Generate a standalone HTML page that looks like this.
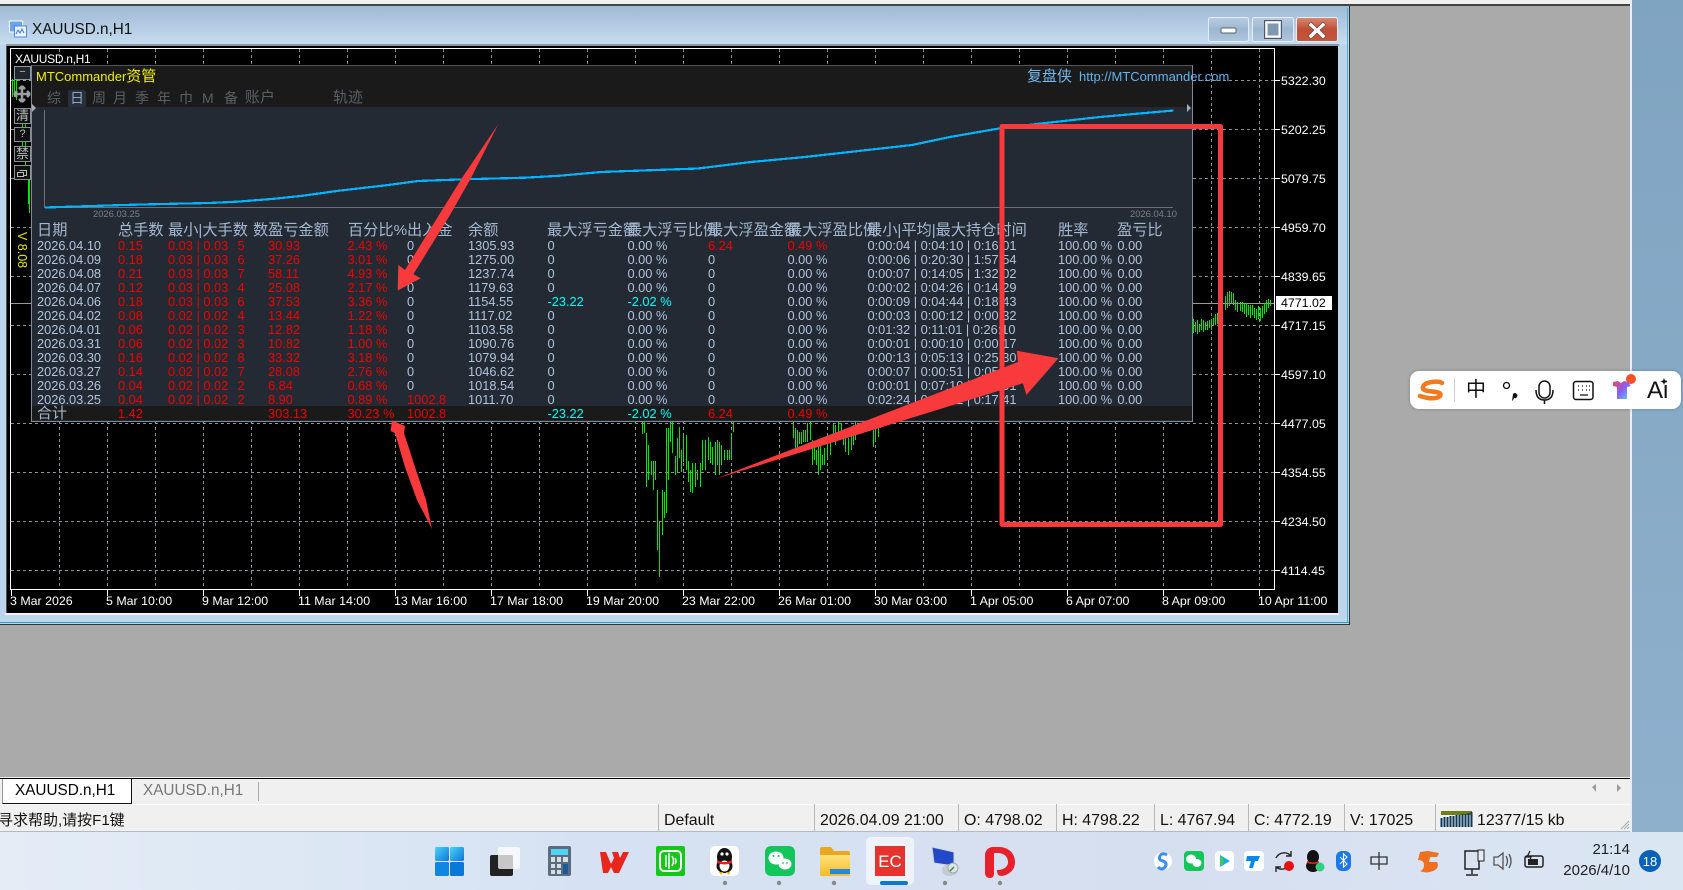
<!DOCTYPE html>
<html><head><meta charset="utf-8"><style>
html,body{margin:0;padding:0;width:1683px;height:890px;overflow:hidden;background:#aaa}
body{position:relative;font-family:"Liberation Sans","Noto Sans CJK SC",sans-serif}
.a{position:absolute;white-space:nowrap}
svg{position:absolute;left:0;top:0;overflow:visible}
.p{color:#fff;font-size:12.4px;left:1281px;line-height:14px}
.d{color:#fff;font-size:12.4px;top:594px;line-height:14px}
.h{top:223px;line-height:16px;font-size:15.2px;color:#a4b8d2}
.t{top:90px;line-height:16px;font-size:14px;color:#5b5f64}
.s{top:812px;line-height:18px;font-size:15.9px;color:#111}
.sep{position:absolute;top:804px;height:27px;width:1px;background:#b8b8b8}
table{position:absolute;left:37px;top:239px;border-collapse:collapse;table-layout:fixed;width:1120.4px;font-size:12.8px;color:#b0c4de}
td{padding:0;height:14px;line-height:14px;white-space:nowrap;overflow:visible}
.r{color:#f00000}.c{color:#0ff}
</style></head><body>

<!-- top strip -->
<div class="a" style="left:0;top:0;width:1630px;height:4px;background:#f0f0f0"></div>
<div class="a" style="left:0;top:4px;width:1630px;height:2px;background:#444"></div>
<!-- wallpaper right -->
<div class="a" style="left:1632px;top:0;width:51px;height:832px;background:linear-gradient(180deg,#7fa4c1,#8fb0cd)"></div>
<div class="a" style="left:1630px;top:0;width:2px;height:832px;background:#e8eef4"></div>

<!-- window -->
<div class="a" style="left:0;top:6px;width:1349px;height:618px;background:linear-gradient(180deg,#9fb9d4 0,#c6dcf0 38px,#bdd5ea 39px);border-right:1px solid #333;border-bottom:1px solid #333;box-sizing:content-box"></div>
<div class="a" style="left:0;top:622px;width:1349px;height:1px;background:#18a6c4"></div>
<div class="a" style="left:1347px;top:8px;width:1px;height:614px;background:#4fb2d8"></div>
<div class="a" style="left:6px;top:44px;width:1333px;height:2px;background:#8d98a4"></div>
<div class="a" style="left:6px;top:46px;width:1px;height:567px;background:#555"></div>
<div class="a" style="left:7px;top:46px;width:1331px;height:567px;background:#000"></div>
<div class="a" style="left:5px;top:613px;width:1334px;height:2px;background:#eef4fa"></div>
<div class="a" style="left:32px;top:21px;font-size:15.3px;line-height:18px;color:#111">XAUUSD.n,H1</div>

<!-- window buttons / chart -->
<svg width="1683" height="890">
<defs>
<linearGradient id="b1" x1="0" y1="0" x2="0" y2="1"><stop offset="0" stop-color="#b9cde2"/><stop offset=".5" stop-color="#9db6d1"/><stop offset="1" stop-color="#aec6de"/></linearGradient>
<linearGradient id="b2" x1="0" y1="0" x2="0" y2="1"><stop offset="0" stop-color="#d98a74"/><stop offset=".5" stop-color="#bf4e36"/><stop offset="1" stop-color="#c7553a"/></linearGradient>
<linearGradient id="w1" x1="0" y1="0" x2="1" y2="1"><stop offset="0" stop-color="#4fd0fb"/><stop offset="1" stop-color="#0a78d8"/></linearGradient>
<linearGradient id="sh" x1="0" y1="0" x2="1" y2="1"><stop offset="0" stop-color="#f04a5a"/><stop offset=".5" stop-color="#8a5cf0"/><stop offset="1" stop-color="#4fe0f0"/></linearGradient>
<linearGradient id="fo" x1="0" y1="0" x2="0" y2="1"><stop offset="0" stop-color="#ffe27a"/><stop offset="1" stop-color="#f6b928"/></linearGradient>
</defs>
<!-- title icon -->
<rect x="9.5" y="21" width="13" height="11" fill="#6aa4e8" stroke="#fff"/><rect x="14.5" y="26" width="12" height="11" fill="#eaf3ff" stroke="#4a8ae0"/><path d="M16 34l2-4 2 3 2-4 2 4" fill="none" stroke="#3a78d0"/>
<rect x="1208.5" y="17.5" width="40" height="24" rx="2" fill="url(#b1)" stroke="#e4eef8"/>
<rect x="1221" y="28" width="15" height="5" rx="1" fill="#fff" stroke="#566"/>
<rect x="1252.5" y="17.5" width="41" height="24" rx="2" fill="url(#b1)" stroke="#e4eef8"/>
<rect x="1266.5" y="22.5" width="13" height="14" fill="#7f97b2" stroke="#fff" stroke-width="2"/><rect x="1264.5" y="20.5" width="17" height="18" fill="none" stroke="#556"/>
<rect x="1296.5" y="17.5" width="41" height="24" rx="2" fill="url(#b2)" stroke="#e4eef8"/>
<path d="M1311 22l6 6 6-6 3 3-6 5 6 6-3 3-6-6-6 6-3-3 6-6-6-5z" fill="#fff" stroke="#633" stroke-width=".6"/>
<!-- grid -->
<g stroke="#8a929a" stroke-width="1" stroke-dasharray="3 3" fill="none">
<path d="M11 80.5H1274M11 129.5H1274M11 178.5H1274M11 227.5H1274M11 276.5H1274M11 325.5H1274M11 374.5H1274M11 423.5H1274M11 472.5H1274M11 521.5H1274M11 570.5H1274"/>
<path d="M59.5 49V589M107.5 49V589M155.5 49V589M203.5 49V589M251.5 49V589M299.5 49V589M347.5 49V589M395.5 49V589M443.5 49V589M491.5 49V589M539.5 49V589M587.5 49V589M635.5 49V589M683.5 49V589M731.5 49V589M779.5 49V589M827.5 49V589M875.5 49V589M923.5 49V589M971.5 49V589M1019.5 49V589M1067.5 49V589M1115.5 49V589M1163.5 49V589M1211.5 49V589M1259.5 49V589"/>
</g>
<path d="M11 303.5H1274" stroke="#9a9a9a"/>
<rect x="10.5" y="48.5" width="1264" height="541" fill="none" stroke="#fff"/>
<path d="M11.5 590V596M107.5 590V596M203.5 590V596M299.5 590V596M395.5 590V596M491.5 590V596M587.5 590V596M683.5 590V596M779.5 590V596M875.5 590V596M971.5 590V596M1067.5 590V596M1163.5 590V596M1259.5 590V596M1275 80.5H1280M1275 129.5H1280M1275 178.5H1280M1275 227.5H1280M1275 276.5H1280M1275 325.5H1280M1275 374.5H1280M1275 423.5H1280M1275 472.5H1280M1275 521.5H1280M1275 570.5H1280" stroke="#fff"/>
<!-- candles -->
<path fill="none" stroke="#00e800" stroke-width="1" d="M12.5 79V97M14.5 79V97M16.5 80V100M22.5 122V146M25.5 122V170M28.5 170V204M29.5 178V213
M635.5 420V424M642.5 420V434M644.5 420V433M646.5 433V487M648.5 445V480M651.5 461V475M653.5 461V490M655.5 461V480M657.5 490V550M659.5 522V577M662.5 490V535M664.5 492V518M666.5 428V513M668.5 428V480M670.5 420V442M672.5 420V453M675.5 456V475M677.5 438V473M679.5 427V458M681.5 450V472M683.5 435V462M686.5 435V470M688.5 461V482M690.5 470V492M692.5 463V493M695.5 463V487M697.5 470V480M700.5 463V487M702.5 440V470M705.5 440V470M708.5 437V460M710.5 442V463M712.5 447V465M715.5 442V475M717.5 440V465M719.5 442V475M721.5 445V465M724.5 450V460M727.5 450V460M729.5 450V460M731.5 433V458M733.5 420V432
M793.5 420V438M795.5 428V448M797.5 430V448M799.5 432V444M801.5 432V444M803.5 430V442M805.5 430V442M807.5 423V442M810.5 422V440M812.5 440V465M814.5 442V460M816.5 450V465M818.5 445V475M820.5 443V470M822.5 455V465M824.5 448V465M827.5 440V458M830.5 438V455M833.5 424V440M835.5 425V445M838.5 422V440M841.5 423V438M843.5 435V445M845.5 438V452M848.5 438V455M851.5 435V450M853.5 425V445M855.5 420V440M873.5 430V447M875.5 428V442M878.5 420V437M880.5 420V428
M1193.5 319V333M1195.5 322V332M1197.5 320V334M1199.5 324V332M1201.5 319V330M1203.5 320V332M1205.5 322V330M1207.5 321V330M1209.5 320V328M1211.5 319V330M1213.5 318V326M1215.5 314V325M1217.5 313V324M1219.5 303V318M1222.5 300V317M1225.5 296V310M1227.5 292V308M1229.5 291V306M1231.5 292V303M1233.5 293V305M1235.5 300V310M1237.5 302V312M1240.5 302V311M1242.5 302V312M1244.5 303V314M1246.5 303V317M1248.5 305V315M1250.5 305V318M1252.5 305V315M1254.5 308V318M1256.5 309V320M1258.5 306V319M1260.5 308V321M1262.5 306V318M1264.5 303V314M1266.5 300V312M1268.5 299V308M1270.5 300V306"/>
</svg>

<!-- chart labels -->
<div class="a" style="left:15px;top:52px;font-size:12px;letter-spacing:-.3px;line-height:14px;color:#fff">XAUUSD.n,H1</div>
<div class="a p" style="top:74px">5322.30</div><div class="a p" style="top:123px">5202.25</div><div class="a p" style="top:172px">5079.75</div><div class="a p" style="top:221px">4959.70</div><div class="a p" style="top:270px">4839.65</div><div class="a p" style="top:319px">4717.15</div><div class="a p" style="top:368px">4597.10</div><div class="a p" style="top:417px">4477.05</div><div class="a p" style="top:466px">4354.55</div><div class="a p" style="top:515px">4234.50</div><div class="a p" style="top:564px">4114.45</div>
<div class="a" style="left:1276px;top:296px;width:56px;height:14px;background:#fff"></div>
<div class="a p" style="top:296px;color:#000">4771.02</div>
<div class="a d" style="left:10px">3 Mar 2026</div><div class="a d" style="left:106px">5 Mar 10:00</div><div class="a d" style="left:202px">9 Mar 12:00</div><div class="a d" style="left:298px">11 Mar 14:00</div><div class="a d" style="left:394px">13 Mar 16:00</div><div class="a d" style="left:490px">17 Mar 18:00</div><div class="a d" style="left:586px">19 Mar 20:00</div><div class="a d" style="left:682px">23 Mar 22:00</div><div class="a d" style="left:778px">26 Mar 01:00</div><div class="a d" style="left:874px">30 Mar 03:00</div><div class="a d" style="left:970px">1 Apr 05:00</div><div class="a d" style="left:1066px">6 Apr 07:00</div><div class="a d" style="left:1162px">8 Apr 09:00</div><div class="a d" style="left:1258px">10 Apr 11:00</div>

<!-- side buttons -->
<div class="a" style="left:14px;top:66px;width:15px;height:12px;border:1px solid #8a98a6;background:#20262c;color:#bbb;font-size:11px;line-height:11px;text-align:center">−</div>
<svg width="1683" height="890"><path d="M22 86V102M14 94H30M22 86l-3 3M22 86l3 3M22 102l-3-3M22 102l3-3M14 94l3-3M14 94l3 3M30 94l-3-3M30 94l-3 3" stroke="#9a9ea2" stroke-width="2.500" fill="none"/></svg>
<div class="a" style="left:14px;top:108px;width:15px;height:14px;border:1px solid #8a9096;background:#111;color:#bbb;font-size:13px;line-height:14px;text-align:center">清</div>
<div class="a" style="left:14px;top:127px;width:15px;height:13px;border:1px solid #8a9096;background:#111;color:#bbb;font-size:11px;line-height:13px;text-align:center">?</div>
<div class="a" style="left:14px;top:146px;width:15px;height:14px;border:1px solid #8a9096;background:#111;color:#bbb;font-size:13px;line-height:14px;text-align:center">禁</div>
<div class="a" style="left:14px;top:165px;width:15px;height:13px;border:1px solid #8a9096;background:#111"></div>
<svg width="1683" height="890"><path d="M19.5 170.5h7v5h-3M17.5 172.5h6v4h-6z" fill="none" stroke="#bbb"/></svg>
<div class="a" style="left:14px;top:232px;width:16px;height:40px;writing-mode:vertical-rl;color:#e8e800;font-size:12.5px;line-height:16px">V 8.08</div>

<!-- panel -->
<div class="a" style="left:31px;top:65px;width:1160px;height:355px;background:#232a33;border:1px solid #7d8a9a;border-top-color:#555;box-sizing:content-box"></div>
<div class="a" style="left:32px;top:66px;width:1160px;height:41px;background:#1a1a1a"></div>
<div class="a" style="left:32px;top:406px;width:1160px;height:14px;background:#1a1a1a"></div>
<div class="a" style="left:36px;top:68px;font-size:13px;line-height:18px;color:#f0f000">MTCommander<span style="font-size:15px">资管</span></div>
<div class="a" style="left:68px;top:90px;width:18px;height:17px;background:#27303c;border-radius:2px"></div>
<div class="a t" style="left:47px">综</div><div class="a t" style="left:70px;color:#90a6c0">日</div><div class="a t" style="left:92px">周</div><div class="a t" style="left:113px">月</div><div class="a t" style="left:135px">季</div><div class="a t" style="left:157px">年</div><div class="a t" style="left:179px">巾</div><div class="a t" style="left:202px">M</div><div class="a t" style="left:224px">备</div><div class="a t" style="left:245px;font-size:15px">账户</div><div class="a t" style="left:333px;font-size:15px">轨迹</div>
<div class="a" style="left:1027px;top:68px;font-size:15px;line-height:18px;color:#74b8ee">复盘侠</div>
<div class="a" style="left:1079px;top:69px;font-size:13px;line-height:16px;color:#64b2ee">http://MTCommander.com</div>

<svg width="1683" height="890">
<path d="M32 104l4 4-4 4zM1191 108l-4-4v8z" fill="#aab"/>
<path d="M44.5 110V207.5H1173" fill="none" stroke="#6c7076"/>
<polyline shape-rendering="crispEdges" points="45,207.500 93,206 123,205 162,204 209,203 237,201.700 275,198.700 303,195.700 339,190.700 386,185.300 418,181 464,179.300 525,177.700 560,175.700 601,172 698,168.500 751,162 805,157 912,145 950,137 973,133 999,128.500 1041,123.500 1100,117 1173.500,110.500" fill="none" stroke="#00b4ff" stroke-width="2.200"/>
</svg>
<div class="a" style="left:93px;top:208px;font-size:9.4px;line-height:12px;color:#7c8087">2026.03.25</div>
<div class="a" style="left:1130px;top:208px;font-size:9.4px;line-height:12px;color:#7c8087">2026.04.10</div>

<div class="a h" style="left:37px">日期</div><div class="a h" style="left:118px">总手数</div><div class="a h" style="left:168px">最小|大手数</div><div class="a h" style="left:253px">数</div><div class="a h" style="left:268px">盈亏金额</div><div class="a h" style="left:348px">百分比%</div><div class="a h" style="left:407px">出入金</div><div class="a h" style="left:468px">余额</div><div class="a h" style="left:547px">最大浮亏金额</div><div class="a h" style="left:627px">最大浮亏比例</div><div class="a h" style="left:708px">最大浮盈金额</div><div class="a h" style="left:787px">最大浮盈比例</div><div class="a h" style="left:867px">最小|平均|最大持仓时间</div><div class="a h" style="left:1058px">胜率</div><div class="a h" style="left:1117px">盈亏比</div>

<table>
<colgroup><col style="width:81px"><col style="width:50px"><col style="width:69.5px"><col style="width:30.5px"><col style="width:79.5px"><col style="width:59.5px"><col style="width:61px"><col style="width:79.5px"><col style="width:80px"><col style="width:80.5px"><col style="width:79.5px"><col style="width:80px"><col style="width:190.5px"><col style="width:59.4px"><col style="width:40px"></colgroup>
<tr><td>2026.04.10<td class=r>0.15<td class=r>0.03 | 0.03<td class=r>5<td class=r>30.93<td class=r>2.43 %<td>0<td>1305.93<td>0<td>0.00 %<td class=r>6.24<td class=r>0.49 %<td>0:00:04 | 0:04:10 | 0:16:01<td>100.00 %<td>0.00
<tr><td>2026.04.09<td class=r>0.18<td class=r>0.03 | 0.03<td class=r>6<td class=r>37.26<td class=r>3.01 %<td>0<td>1275.00<td>0<td>0.00 %<td>0<td>0.00 %<td>0:00:06 | 0:20:30 | 1:57:54<td>100.00 %<td>0.00
<tr><td>2026.04.08<td class=r>0.21<td class=r>0.03 | 0.03<td class=r>7<td class=r>58.11<td class=r>4.93 %<td>0<td>1237.74<td>0<td>0.00 %<td>0<td>0.00 %<td>0:00:07 | 0:14:05 | 1:32:02<td>100.00 %<td>0.00
<tr><td>2026.04.07<td class=r>0.12<td class=r>0.03 | 0.03<td class=r>4<td class=r>25.08<td class=r>2.17 %<td>0<td>1179.63<td>0<td>0.00 %<td>0<td>0.00 %<td>0:00:02 | 0:04:26 | 0:14:29<td>100.00 %<td>0.00
<tr><td>2026.04.06<td class=r>0.18<td class=r>0.03 | 0.03<td class=r>6<td class=r>37.53<td class=r>3.36 %<td>0<td>1154.55<td class=c>-23.22<td class=c>-2.02 %<td>0<td>0.00 %<td>0:00:09 | 0:04:44 | 0:18:43<td>100.00 %<td>0.00
<tr><td>2026.04.02<td class=r>0.08<td class=r>0.02 | 0.02<td class=r>4<td class=r>13.44<td class=r>1.22 %<td>0<td>1117.02<td>0<td>0.00 %<td>0<td>0.00 %<td>0:00:03 | 0:00:12 | 0:00:32<td>100.00 %<td>0.00
<tr><td>2026.04.01<td class=r>0.06<td class=r>0.02 | 0.02<td class=r>3<td class=r>12.82<td class=r>1.18 %<td>0<td>1103.58<td>0<td>0.00 %<td>0<td>0.00 %<td>0:01:32 | 0:11:01 | 0:26:10<td>100.00 %<td>0.00
<tr><td>2026.03.31<td class=r>0.06<td class=r>0.02 | 0.02<td class=r>3<td class=r>10.82<td class=r>1.00 %<td>0<td>1090.76<td>0<td>0.00 %<td>0<td>0.00 %<td>0:00:01 | 0:00:10 | 0:00:17<td>100.00 %<td>0.00
<tr><td>2026.03.30<td class=r>0.16<td class=r>0.02 | 0.02<td class=r>8<td class=r>33.32<td class=r>3.18 %<td>0<td>1079.94<td>0<td>0.00 %<td>0<td>0.00 %<td>0:00:13 | 0:05:13 | 0:25:30<td>100.00 %<td>0.00
<tr><td>2026.03.27<td class=r>0.14<td class=r>0.02 | 0.02<td class=r>7<td class=r>28.08<td class=r>2.76 %<td>0<td>1046.62<td>0<td>0.00 %<td>0<td>0.00 %<td>0:00:07 | 0:00:51 | 0:05:40<td>100.00 %<td>0.00
<tr><td>2026.03.26<td class=r>0.04<td class=r>0.02 | 0.02<td class=r>2<td class=r>6.84<td class=r>0.68 %<td>0<td>1018.54<td>0<td>0.00 %<td>0<td>0.00 %<td>0:00:01 | 0:07:10 | 0:14:01<td>100.00 %<td>0.00
<tr><td>2026.03.25<td class=r>0.04<td class=r>0.02 | 0.02<td class=r>2<td class=r>8.90<td class=r>0.89 %<td class=r>1002.8<td>1011.70<td>0<td>0.00 %<td>0<td>0.00 %<td>0:02:24 | 0:08:12 | 0:17:41<td>100.00 %<td>0.00
<tr><td style="font-size:15px;color:#a4b8d2">合计<td class=r>1.42<td><td><td class=r>303.13<td class=r>30.23 %<td class=r>1002.8<td><td class=c>-23.22<td class=c>-2.02 %<td class=r>6.24<td class=r>0.49 %<td><td><td>
</table>

<!-- red annotations -->
<svg width="1683" height="890">
<path d="M498.300 124L471 178L450 215L413.300 274.300L420.700 278.300L397.700 290.500L398.300 265L405 270L439 215L462 178Z" fill="#f93a3c"/>
<path d="M392 420.500L405 426L404 433L415 467L426 500L432 529L417 500L405 467L395 433L390.600 431Z" fill="#f93a3c"/>
<path d="M716 478.700L1018 362L1016.800 350.700L1058.500 358.300L1026.400 395L1022.900 383.300Z" fill="#f93a3c"/>
<path d="M1002 126.500H1220.500V524.500H1002Z" fill="none" stroke="#f93a3c" stroke-width="5" stroke-linejoin="round"/>
</svg>

<!-- tab bar / status -->
<div class="a" style="left:0;top:777px;width:1630px;height:55px;background:#f0f0f0"></div>
<div class="a" style="left:0;top:778px;width:1630px;height:1px;background:#000"></div>
<div class="a" style="left:2px;top:779px;width:128px;height:24px;background:#fff;border-right:1px solid #111;border-bottom:1px solid #111;border-left:1px solid #999"></div>
<div class="a" style="left:15px;top:782px;font-size:15.3px;line-height:18px;color:#000">XAUUSD.n,H1</div>
<div class="a" style="left:143px;top:782px;font-size:15.3px;line-height:18px;color:#777">XAUUSD.n,H1</div>
<div class="a" style="left:258px;top:782px;width:1px;height:19px;background:#aaa"></div>
<div class="a" style="left:0;top:804px;width:1630px;height:1px;background:#fafafa"></div>
<div class="a" style="left:0;top:831px;width:1630px;height:1px;background:#b4bac4"></div>
<div class="a s" style="left:-2px;font-size:15px">寻求帮助,请按F1键</div>
<div class="sep" style="left:658px"></div><div class="sep" style="left:814px"></div><div class="sep" style="left:958px"></div><div class="sep" style="left:1056px"></div><div class="sep" style="left:1154px"></div><div class="sep" style="left:1248px"></div><div class="sep" style="left:1344px"></div><div class="sep" style="left:1435px"></div>
<div class="a s" style="left:664px">Default</div><div class="a s" style="left:820px">2026.04.09 21:00</div><div class="a s" style="left:964px">O: 4798.02</div><div class="a s" style="left:1062px">H: 4798.22</div><div class="a s" style="left:1160px">L: 4767.94</div><div class="a s" style="left:1254px">C: 4772.19</div><div class="a s" style="left:1350px">V: 17025</div><div class="a s" style="left:1477px">12377/15 kb</div>

<!-- taskbar -->
<div class="a" style="left:0;top:832px;width:1683px;height:58px;background:linear-gradient(90deg,#e4edf6,#d6e2f3 35%,#d6dff0 70%,#dbe6f3)"></div>
<div class="a" style="left:866px;top:837px;width:48px;height:48px;background:#eef2f9;border-radius:5px"></div>

<svg width="1683" height="890">
<path d="M1592 787l4-3v8zM1617 784l4 4-4 4z" fill="#9a9a9a"/>
<!-- net bars -->
<path d="M1441 815h31v-4h-31z" fill="#6f7f14"/><path d="M1441.500 827V818M1444.500 827V817M1447.500 827V817M1450.500 827V816M1453.500 827V816M1456.500 827V815M1459.500 827V815M1462.500 827V814M1465.500 827V814M1468.500 827V813M1471.500 827V812" stroke="#0e3a5a" stroke-width="2"/>
<path d="M1621 829l8-8M1624 829l5-5M1627 829l2-2" stroke="#aaa"/>
<!-- start -->
<g><rect x="435" y="847" width="14" height="14" rx="1.500" fill="url(#w1)"/><rect x="450" y="847" width="14" height="14" rx="1.500" fill="url(#w1)"/><rect x="435" y="862" width="14" height="14" rx="1.500" fill="#0f86e0"/><rect x="450" y="862" width="14" height="14" rx="1.500" fill="#0a78d8"/></g>
<!-- task view -->
<rect x="490" y="855" width="23" height="21" rx="2" fill="#222"/><rect x="498" y="847" width="22" height="22" rx="2" fill="#fff" fill-opacity=".75"/>
<!-- calc -->
<rect x="548" y="846" width="23" height="30" rx="2" fill="#5a6c7e"/><rect x="551" y="849" width="17" height="6" fill="#4fd4f4"/><path d="M551 857h4v5h-4zM557 857h4v5h-4zM563 857h5v5h-5zM551 864h4v4h-4zM557 864h4v4h-4zM551 870h4v4h-4zM557 870h4v4h-4z" fill="#d8dde2"/><rect x="563" y="864" width="5" height="10" fill="#1a5a9a"/>
<!-- WPS -->
<path d="M600 852h6l5 12 3-6-2-6h6l2 6 3-6h6l-10 21h-5l-3-6-3 6h-5z" fill="#e8261c"/>
<!-- green app -->
<rect x="656" y="846" width="29" height="30" rx="2" fill="#14c81a"/><rect x="660" y="851" width="21" height="20" rx="4" fill="none" stroke="#fff" stroke-width="2"/><path d="M666 855v12M669 853v16M672 856q3 5 0 10M675 858q2 3 0 6" stroke="#fff" stroke-width="1.500" fill="none"/>
<!-- QQ -->
<rect x="710" y="846" width="29" height="30" rx="5" fill="#fff"/><ellipse cx="724.500" cy="857" rx="7.500" ry="9" fill="#111"/><ellipse cx="724.500" cy="866" rx="8" ry="7" fill="#111"/><ellipse cx="724.500" cy="866" rx="5" ry="5.500" fill="#fff"/><circle cx="722" cy="854" r="1.600" fill="#fff"/><circle cx="727" cy="854" r="1.600" fill="#fff"/><path d="M717 860q7.500 4 15 0v3q-7 3-15 0z" fill="#e8201c"/><path d="M719 872h4l-2 3zM726 872h4l-1 3z" fill="#f4a818"/>
<!-- wechat -->
<rect x="765" y="846" width="30" height="30" rx="6" fill="#12c65c"/><ellipse cx="776" cy="858" rx="7.500" ry="6.500" fill="#fff"/><ellipse cx="785" cy="864" rx="6.500" ry="5.500" fill="#fff"/><circle cx="773.500" cy="856" r="1" fill="#12c65c"/><circle cx="778.500" cy="856" r="1" fill="#12c65c"/><circle cx="783" cy="863" r=".9" fill="#12c65c"/><circle cx="787" cy="863" r=".9" fill="#12c65c"/>
<!-- folder -->
<path d="M820 849a2 2 0 0 1 2-2h9l3 4h14a2 2 0 0 1 2 2v21a2 2 0 0 1-2 2h-26a2 2 0 0 1-2-2z" fill="#e9a820"/><path d="M820 855h30v19a2 2 0 0 1-2 2h-26a2 2 0 0 1-2-2z" fill="url(#fo)"/><rect x="830" y="869" width="20" height="5" fill="#1f8ade"/>
<!-- EC -->
<rect x="875" y="846" width="30" height="30" fill="#e6332e"/><text x="890" y="867" text-anchor="middle" font-family="Liberation Sans" font-size="17" fill="#fff">EC</text>
<rect x="880" y="881" width="28" height="4" rx="2" fill="#0a78d4"/>
<!-- network -->
<path d="M932 847l22 5v14l-20-3z" fill="#2348c8" stroke="#cfd5dc"/><ellipse cx="950" cy="870" rx="8" ry="6" fill="#c4cbd2"/><circle cx="953" cy="868" r="5" fill="#dfe4e8" stroke="#9aa"/><path d="M950 871l4-4" stroke="#2a9a2a" stroke-width="1.500"/>
<!-- D -->
<path d="M985 855a8 8 0 0 1 8-8h6c9 0 16 6 16 15s-7 13-13 14c-4 0-5-2-5-6 5 0 11-2 11-8s-5-9-10-9h-4v20c0 3-1 5-4 5s-5-2-5-5z" fill="#e8202c"/>
<!-- dots -->
<circle cx="725" cy="883" r="2.200" fill="#888"/><circle cx="779" cy="883" r="2.200" fill="#888"/><circle cx="834" cy="883" r="2.200" fill="#888"/><circle cx="945" cy="883" r="2.200" fill="#888"/><circle cx="1000" cy="883" r="2.200" fill="#888"/>
<!-- tray -->
<circle cx="1163" cy="861" r="9" fill="#fff"/><path d="M1167 855q-5-3-7 1t3 5q5 2 2 6t-7 0" fill="none" stroke="#3a8ef0" stroke-width="3"/>
<rect x="1184" y="851" width="20" height="20" rx="4" fill="#12c65c"/><ellipse cx="1191" cy="859" rx="5" ry="4.500" fill="#fff"/><ellipse cx="1197" cy="863" rx="4.500" ry="4" fill="#fff"/>
<rect x="1215" y="851" width="19" height="20" rx="4" fill="#fff"/><path d="M1220 855l10 6-10 6z" fill="#1aa8f0"/><path d="M1220 855l5 6-5 6z" fill="#3ac860"/>
<rect x="1244" y="851" width="20" height="20" rx="4" fill="#fff"/><path d="M1247 856h13l-2 5h-3l-2 7h-4l2-7h-5z" fill="#0a88e8"/>
<path d="M1276 858a9 9 0 0 1 15-2M1290 864a9 9 0 0 1-14 3M1291 851v5h-5M1276 872v-5h5" fill="none" stroke="#222" stroke-width="1.400"/><circle cx="1289" cy="866" r="5" fill="#e81010"/>
<ellipse cx="1313" cy="857" rx="6" ry="7" fill="#111"/><ellipse cx="1313" cy="866" rx="7" ry="6" fill="#111"/><path d="M1307 861q6 3 12 0v2q-6 2-12 0z" fill="#e82020"/><circle cx="1320" cy="867" r="4.500" fill="#30d080"/>
<rect x="1336" y="851" width="15" height="20" rx="6" fill="#1a78e8"/><path d="M1340 857l7 7-3.500 3v-13l3.500 3-7 7" fill="none" stroke="#fff" stroke-width="1.100"/>
<path d="M1379 852v18M1371 857h16v7h-16z" fill="none" stroke="#333" stroke-width="1.300"/>
<path d="M1428 851l-8 1-2 8q6 0 6 5t-4 6q6 3 13 0t4-9h-8l1-5 7 0 2-4z" fill="#f07020"/>
<path d="M1465 851h14v18h-14zM1472 869v5M1466 875h12" fill="none" stroke="#222" stroke-width="1.500"/><rect x="1478" y="850" width="6" height="11" fill="#e4ebf5" stroke="#222"/>
<path d="M1494 857h4l5-4v16l-5-4h-4zM1506 856q3 5 0 10M1509 854q4 7 0 14" fill="none" stroke="#555" stroke-width="1.300"/>
<rect x="1525" y="856" width="18" height="11" rx="2" fill="none" stroke="#222" stroke-width="1.500"/><rect x="1528" y="859" width="10" height="6" fill="#222"/><path d="M1530 851l-3 6h4l-2 6" stroke="#222" fill="none" stroke-width="1.300"/>
<circle cx="1650" cy="861" r="11" fill="#0a62b8"/>
<text x="1650" y="866" text-anchor="middle" font-family="Liberation Sans" font-size="13" fill="#fff">18</text>
</svg>
<div class="a" style="right:53px;top:841px;font-size:15px;line-height:18px;color:#222">21:14</div>
<div class="a" style="right:53px;top:862px;font-size:15px;line-height:18px;color:#222">2026/4/10</div>

<!-- IME bar -->
<div class="a" style="left:1410px;top:371px;width:271px;height:38px;background:#fff;border-radius:9px;box-shadow:0 0 3px rgba(0,0,0,.25)"></div>
<div class="a" style="left:1454px;top:378px;width:1px;height:24px;background:#ccc"></div>
<div class="a" style="left:1466px;top:378px;font-size:20px;line-height:24px;color:#111">中</div>
<div class="a" style="left:1647px;top:376px;font-size:24px;line-height:30px;color:#111">Ai</div>
<svg width="1683" height="890">
<path d="M1442 383q-3-2-10-1-8 1-9 5-1 3 5 4l8 1q6 1 4 4-3 3-12 2-5-1-8-2" fill="none" stroke="#f07a1e" stroke-width="4.500" stroke-linecap="round"/>
<circle cx="1506.500" cy="385.500" r="3" fill="none" stroke="#111" stroke-width="1.300"/><path d="M1513 394a2.500 2.500 0 1 1 1 4q-.5 2-2 3" fill="#111"/>
<rect x="1539" y="381" width="11" height="17" rx="5.500" fill="none" stroke="#111" stroke-width="1.500"/><path d="M1536 390q0 10 8.500 10t8.500-10M1544.500 400v4" fill="none" stroke="#111" stroke-width="1.500"/>
<rect x="1573.500" y="381.500" width="19.500" height="18" rx="2.500" fill="none" stroke="#111" stroke-width="1.500"/><path d="M1578 386h1M1582 386h1M1586 386h1M1590 386h-1M1578 390h1M1582 390h1M1586 390h1M1590 390h-1M1580 395h8" stroke="#111" stroke-width="1.300"/>
<path d="M1613 382l5-1 3 2 3-2 4 1 3 4-4 1v12h-10v-12l-4-1z" fill="url(#sh)"/><circle cx="1631" cy="379" r="5" fill="#f4502c"/>
<path d="M1664 378l1 2.500 2.500 1-2.500 1-1 2.500-1-2.500-2.500-1 2.500-1z" fill="#111"/>
</svg>
</body></html>
